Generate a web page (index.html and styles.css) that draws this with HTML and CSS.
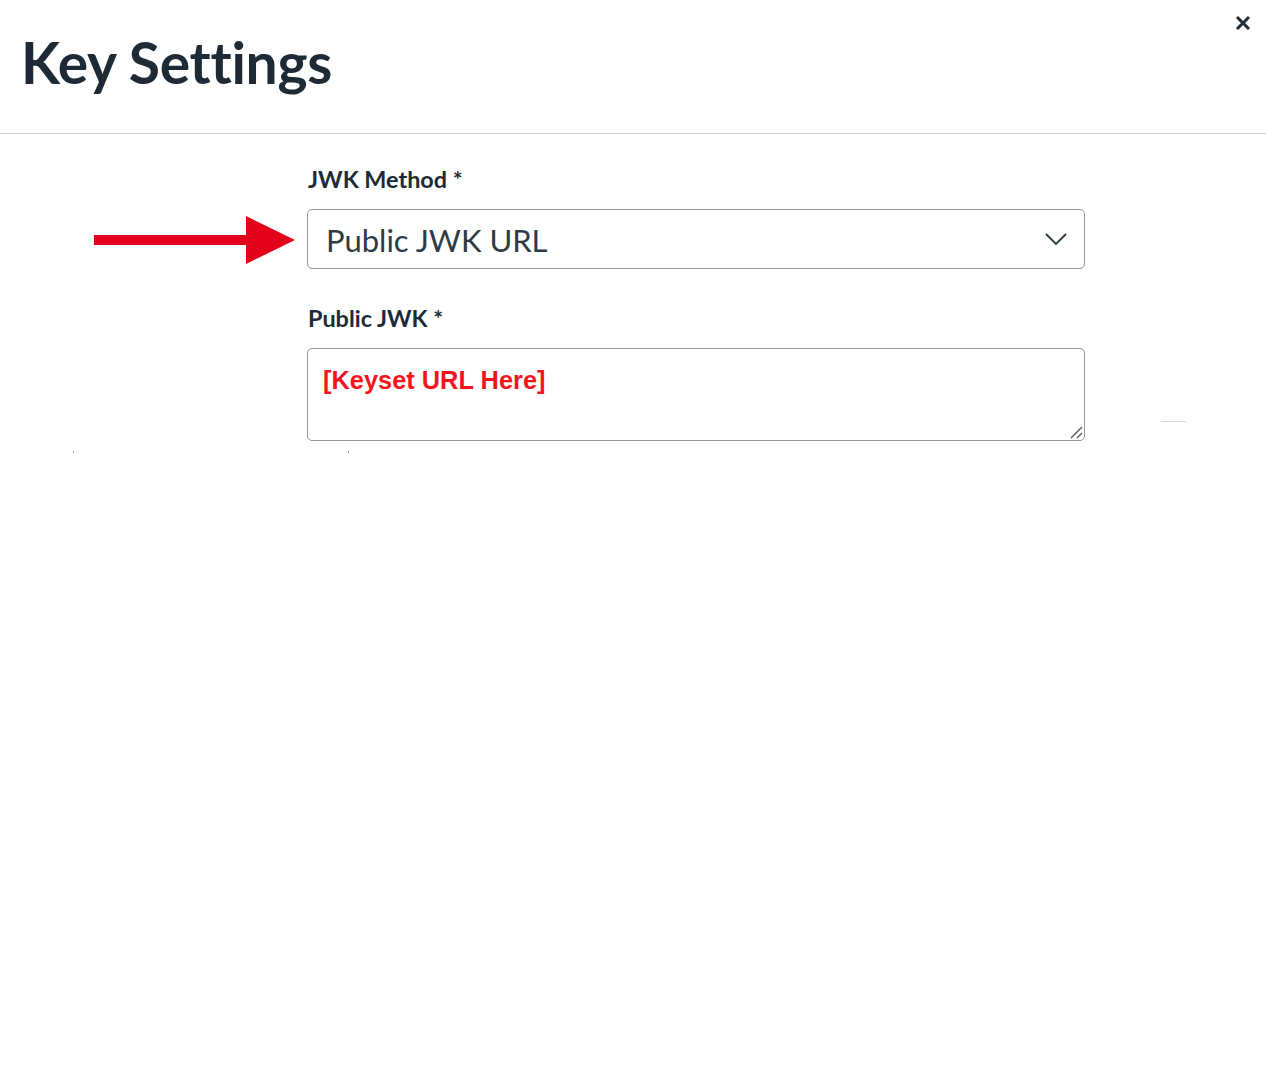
FILE: index.html
```html
<!DOCTYPE html>
<html>
<head>
<meta charset="utf-8">
<link rel="stylesheet" href="styles.css">
</head>
<body>
<div class="modal">
  <header class="modal-header">
    <h1 class="title">Key Settings</h1>
    <button class="close" aria-label="Close">
      <svg width="16" height="16" viewBox="0 0 16 16"><path d="M2 2 L14 14 M14 2 L2 14" stroke="#1e2a35" stroke-width="3" stroke-linecap="butt" fill="none"/></svg>
    </button>
  </header>
  <main class="modal-body">
    <div class="form">
      <div class="field">
        <label class="label">JWK Method *</label>
        <div class="select">
          <span class="select-value">Public JWK URL</span>
          <svg class="chevron" width="22" height="14" viewBox="0 0 22 14"><path d="M1 2 L11 12 L21 2" stroke="#2d3b45" stroke-width="1.8" fill="none"/></svg>
          <svg class="arrow" width="202" height="50" viewBox="0 0 202 50"><rect x="0" y="19" width="156" height="10" fill="#e2001a"/><polygon points="152,0 201,24 152,48" fill="#e2001a"/></svg>
        </div>
      </div>
      <div class="field">
        <label class="label">Public JWK *</label>
        <div class="textarea">
          <span class="keyset">[Keyset URL Here]</span>
          <svg class="grip" width="14" height="14" viewBox="0 0 14 14"><path d="M2 13 L13 2 M8 13 L13 8" stroke="#555" stroke-width="1.4" fill="none"/></svg>
        </div>
      </div>
    </div>
    <span class="hairline"></span>
    <span class="dot dot-a"></span>
    <span class="dot dot-b"></span>
  </main>
</div>
</body>
</html>
```
FILE: styles.css
```css
html, body {
  margin: 0;
  padding: 0;
  background: #fff;
}
body {
  font-family: Lato, "Noto Sans", sans-serif;
  color: #1e2a35;
}
.modal {
  width: 1266px;
  height: 1068px;
  position: relative;
}
.modal-header {
  height: 134px;
  border-bottom: 1px solid #c7cdd1;
  box-sizing: border-box;
  display: flex;
  align-items: flex-start;
  justify-content: space-between;
  padding: 0 15px 0 21px;
}
.title {
  margin: 27px 0 0 0;
  font-size: 57px;
  font-weight: 700;
  line-height: 70px;
  color: #1e2a35;
  letter-spacing: -0.3px;
}
.close {
  margin-top: 15px;
  border: none;
  background: none;
  padding: 0;
  width: 16px;
  height: 16px;
  display: block;
}
.close svg { display: block; }
.modal-body {
  position: relative;
  padding-top: 30px;
}
.form {
  margin-left: 307px;
  width: 778px;
  display: flex;
  flex-direction: column;
  gap: 34px;
}
.field {
  display: flex;
  flex-direction: column;
}
.label {
  font-size: 23.4px;
  font-weight: 700;
  line-height: 30px;
  color: #1e2a35;
  margin-bottom: 15px;
  margin-left: 1px;
}
.select {
  position: relative;
  height: 60px;
  border: 1px solid #8b969e;
  border-radius: 5px;
  box-sizing: border-box;
  display: flex;
  align-items: center;
  padding: 0 17px 0 18px;
}
.select-value {
  flex: 1;
  font-size: 31px;
  color: #2d3b45;
  line-height: 40px;
  padding-top: 2px;
}
.chevron { display: block; }
.arrow {
  position: absolute;
  left: -214px;
  top: 6px;
}
.textarea {
  position: relative;
  height: 93px;
  border: 1px solid #8b969e;
  border-radius: 5px;
  box-sizing: border-box;
  padding: 15px 15px;
}
.keyset {
  font-family: "Liberation Sans", Arial, sans-serif;
  font-weight: 700;
  font-size: 25.4px;
  color: #f5141e;
  line-height: 32px;
}
.grip {
  position: absolute;
  right: 1px;
  bottom: 1px;
}
.hairline {
  position: absolute;
  left: 1161px;
  top: 287px;
  width: 25px;
  height: 1px;
  background: #d7dbde;
}
.dot {
  position: absolute;
  top: 317px;
  width: 1px;
  height: 2px;
  background: #8b969e;
}
.dot-a { left: 73px; }
.dot-b { left: 348px; }
```
